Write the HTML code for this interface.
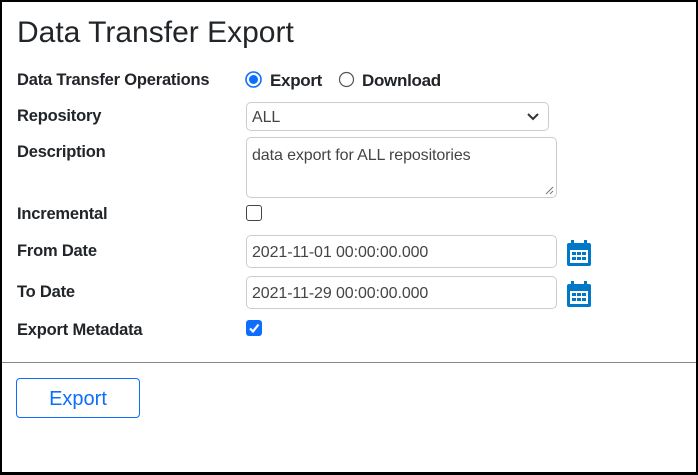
<!DOCTYPE html>
<html><head><style>
*{box-sizing:border-box;margin:0;padding:0}
body{width:698px;height:475px;background:#fff;font-family:"Liberation Sans",sans-serif;color:#212529;position:relative;overflow:hidden}
.frame{position:absolute;left:0;top:0;width:698px;height:475px;border:2px solid #000;border-bottom:3px solid #000}
.a{position:absolute;white-space:nowrap}
h1{position:absolute;left:17px;top:16px;font-size:30px;font-weight:400;color:#212529;letter-spacing:0}
.l{font-size:16.5px;font-weight:bold;left:17px;letter-spacing:-0.2px}
.in{position:absolute;left:246px;border:1px solid #ccc;border-radius:5px;background:#fff;font-size:16px;color:#444;padding-left:5px;letter-spacing:-0.1px}
.cal{position:absolute;left:566px}
</style></head><body>
<div class="frame"></div>
<h1>Data Transfer Export</h1>
<div class="a l" style="top:71px">Data Transfer Operations</div>
<div class="a l" style="top:107px">Repository</div>
<div class="a l" style="top:143px">Description</div>
<div class="a l" style="top:205px">Incremental</div>
<div class="a l" style="top:242px">From Date</div>
<div class="a l" style="top:283px">To Date</div>
<div class="a l" style="top:321px">Export Metadata</div>

<svg class="a" style="left:245px;top:71px" width="18" height="18"><circle cx="8.5" cy="8.5" r="7.5" fill="#fff" stroke="#0d6efd" stroke-width="1.6"/><circle cx="8.5" cy="8.5" r="4.5" fill="#0d6efd"/></svg>
<div class="a" style="left:270px;top:71px;font-size:17px;font-weight:bold;letter-spacing:-0.3px">Export</div>
<svg class="a" style="left:338px;top:71px" width="18" height="18"><circle cx="8.5" cy="8.5" r="7" fill="#fff" stroke="#555" stroke-width="1.2"/></svg>
<div class="a" style="left:362px;top:71px;font-size:17px;font-weight:bold;letter-spacing:-0.3px">Download</div>

<div class="in" style="top:102px;width:303px;height:29px;line-height:29px">ALL
<svg style="position:absolute;right:9px;top:9px" width="12" height="9"><path d="M1 2 L6 7 L11 2" fill="none" stroke="#333" stroke-width="2"/></svg></div>
<div class="in" style="top:137px;width:311px;height:61px;line-height:20px;padding-top:8px">data export for ALL repositories
<svg style="position:absolute;right:2px;bottom:2px" width="10" height="10"><path d="M9 2 L2 9 M9 6 L6 9" stroke="#777" stroke-width="1"/></svg></div>
<div class="a" style="left:246px;top:205px;width:16px;height:16px;border:1px solid #444;border-radius:3px"></div>
<div class="in" style="top:235px;width:311px;height:33px;line-height:33px">2021-11-01 00:00:00.000</div>
<div class="in" style="top:276px;width:311px;height:33px;line-height:33px">2021-11-29 00:00:00.000</div>
<svg class="cal" style="top:240px" width="26" height="27"><rect x="1" y="3" width="24" height="23" rx="2" fill="#0078c8"/><rect x="4" y="10" width="18" height="13" fill="#fff"/><rect x="5" y="0" width="3" height="6" fill="#0078c8"/><rect x="18" y="0" width="3" height="6" fill="#0078c8"/><g fill="#0078c8"><rect x="6" y="12" width="4" height="3"/><rect x="11" y="12" width="4" height="3"/><rect x="16" y="12" width="4" height="3"/><rect x="6" y="17" width="4" height="3"/><rect x="11" y="17" width="4" height="3"/><rect x="16" y="17" width="4" height="3"/></g></svg>
<svg class="cal" style="top:281px" width="26" height="27"><rect x="1" y="3" width="24" height="23" rx="2" fill="#0078c8"/><rect x="4" y="10" width="18" height="13" fill="#fff"/><rect x="5" y="0" width="3" height="6" fill="#0078c8"/><rect x="18" y="0" width="3" height="6" fill="#0078c8"/><g fill="#0078c8"><rect x="6" y="12" width="4" height="3"/><rect x="11" y="12" width="4" height="3"/><rect x="16" y="12" width="4" height="3"/><rect x="6" y="17" width="4" height="3"/><rect x="11" y="17" width="4" height="3"/><rect x="16" y="17" width="4" height="3"/></g></svg>
<svg class="a" style="left:246px;top:320px" width="17" height="17"><rect x="0" y="0" width="16" height="16" rx="3" fill="#0d6efd"/><path d="M4 8.5 L7 11.5 L12.5 4.5" fill="none" stroke="#fff" stroke-width="2.2"/></svg>
<div class="a" style="left:2px;top:362px;width:694px;height:1px;background:#888"></div>
<div class="a" style="left:16px;top:378px;width:124px;height:40px;border:1px solid #0d6efd;border-radius:4px;color:#0d6efd;font-size:20px;text-align:center;line-height:40px">Export</div>
</body></html>
